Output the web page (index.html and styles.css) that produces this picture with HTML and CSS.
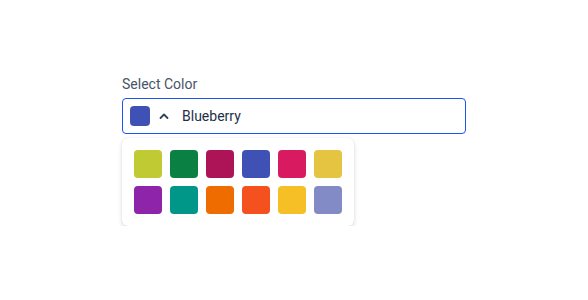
FILE: index.html
```html
<!DOCTYPE html>
<html>
  <head>
    <title>Select Color</title>
    <link rel="stylesheet" href="styles.css">
  </head>
  <body>
    <div class="field">
      <label class="field-label" for="color">Select Color</label>
      <div class="select" id="color">
        <span class="current" style="background-color: #3f51b5"></span>
        <svg class="chevron" width="16" height="16" viewBox="0 0 16 16">
          <path d="M4.5 10 L8 6.5 L11.5 10" fill="none" stroke="#33435a" stroke-width="1.8" stroke-linecap="round" stroke-linejoin="round"/>
        </svg>
        <span class="value">Blueberry</span>
      </div>
      <div class="palette">
        <span class="swatch" title="Avocado" style="background-color: #c0ca33"></span>
        <span class="swatch" title="Basil" style="background-color: #0b8043"></span>
        <span class="swatch" title="Beetroot" style="background-color: #ad1457"></span>
        <span class="swatch" title="Blueberry" style="background-color: #3f51b5"></span>
        <span class="swatch" title="Cherry blossom" style="background-color: #d81b60"></span>
        <span class="swatch" title="Citron" style="background-color: #e4c441"></span>
        <span class="swatch" title="Grape" style="background-color: #8e24aa"></span>
        <span class="swatch" title="Eucalyptus" style="background-color: #009688"></span>
        <span class="swatch" title="Pumpkin" style="background-color: #ef6c00"></span>
        <span class="swatch" title="Tangerine" style="background-color: #f4511e"></span>
        <span class="swatch" title="Mango" style="background-color: #f6bf26"></span>
        <span class="swatch" title="Lavender" style="background-color: #828bc5"></span>
      </div>
    </div>
  </body>
</html>
```

FILE: styles.css
```css
body {
  margin: 0;
  background-color: #fff;
  font-family: Roboto, "Liberation Sans", sans-serif;
}

.field {
  display: flex;
  flex-direction: column;
  align-items: flex-start;
  padding: 74px 0 0 122px;
}

.field-label {
  font-size: 14px;
  line-height: 20px;
  color: #475569;
  margin-bottom: 4px;
}

.select {
  box-sizing: border-box;
  display: flex;
  align-items: center;
  width: 344px;
  height: 36px;
  padding-left: 7px;
  border: 1px solid #1f55ec;
  border-radius: 4px;
}

.current {
  width: 20px;
  height: 20px;
  border-radius: 4px;
}

.chevron {
  margin-left: 6px;
}

.value {
  margin-left: 10px;
  font-size: 14px;
  color: #1e2f47;
}

.palette {
  display: grid;
  grid-template-columns: repeat(6, 28px);
  gap: 8px;
  padding: 12px;
  margin-top: 4px;
  background-color: #fff;
  border-radius: 6px;
  box-shadow: 0 2px 5px rgba(0, 0, 0, 0.14), 0 0 1px rgba(0, 0, 0, 0.12);
}

.swatch {
  width: 28px;
  height: 28px;
  border-radius: 4px;
}
```
